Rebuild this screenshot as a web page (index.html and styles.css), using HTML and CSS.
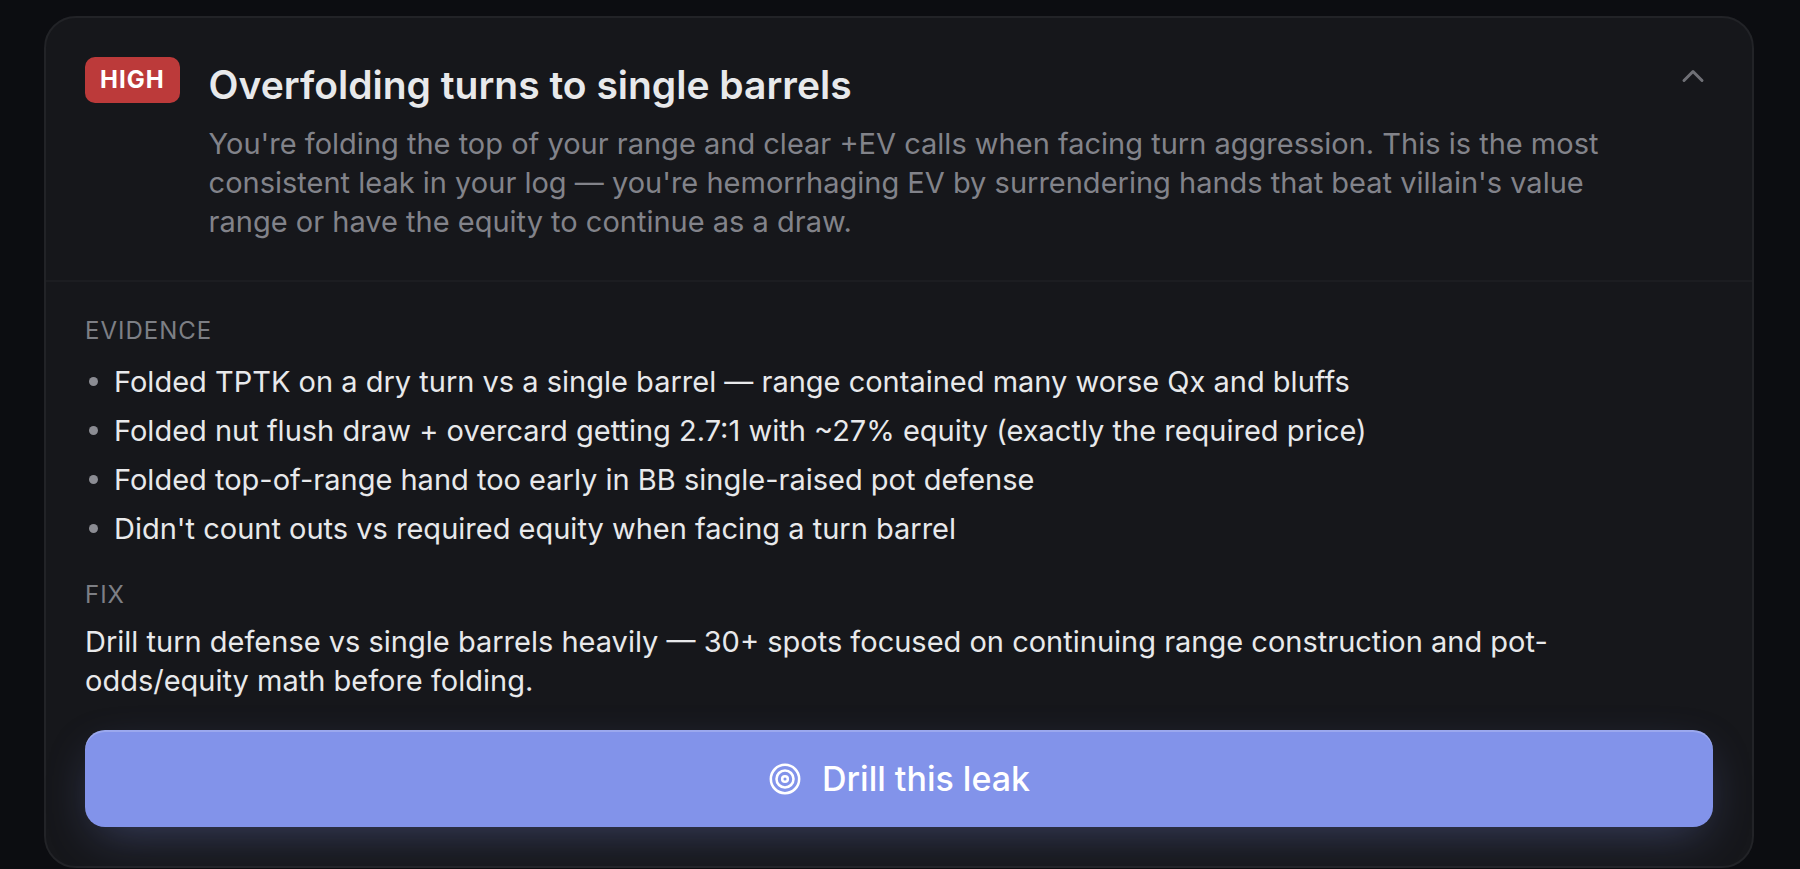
FILE: index.html
```html
<!DOCTYPE html>
<html lang="en">
<head>
  <meta charset="UTF-8">
  <meta name="viewport" content="width=device-width, initial-scale=1.0">
  <title>Leak Report</title>
  <link rel="stylesheet" href="styles.css">
</head>
<body>
  <article class="leak-card">
    <header class="leak-header">
      <span class="badge">HIGH</span>
      <div class="leak-summary">
        <h2>Overfolding turns to single barrels</h2>
        <p>You're folding the top of your range and clear +EV calls when facing turn aggression. This is the most consistent leak in your log — you're hemorrhaging EV by surrendering hands that beat villain's value range or have the equity to continue as a draw.</p>
      </div>
      <button class="toggle" type="button" aria-label="Collapse" aria-expanded="true">
        <svg viewBox="0 0 24 24"><path d="m18 15-6-6-6 6"/></svg>
      </button>
    </header>

    <div class="leak-body">
      <section>
        <h3>EVIDENCE</h3>
        <ul class="evidence">
          <li>Folded TPTK on a dry turn vs a single barrel — range contained many worse Qx and bluffs</li>
          <li>Folded nut flush draw + overcard getting 2.7:1 with ~27% equity (exactly the required price)</li>
          <li>Folded top-of-range hand too early in BB single-raised pot defense</li>
          <li>Didn't count outs vs required equity when facing a turn barrel</li>
        </ul>
      </section>
      <section>
        <h3>FIX</h3>
        <p class="fix">Drill turn defense vs single barrels heavily — 30+ spots focused on continuing range construction and pot-odds/equity math before folding.</p>
      </section>
      <button class="drill-button" type="button">
        <svg viewBox="0 0 24 24"><circle cx="12" cy="12" r="10"/><circle cx="12" cy="12" r="6"/><circle cx="12" cy="12" r="2"/></svg>
        Drill this leak
      </button>
    </div>
  </article>
</body>
</html>
```
FILE: styles.css
```css
* {
  box-sizing: border-box;
}

body {
  margin: 0;
  padding: 16px 46px 0 44px;
  background: #0c0d11;
  color: #e8e9eb;
  font-family: Inter, sans-serif;
  font-size: 29px;
  line-height: 39px;
}

h2, h3, p, ul {
  margin: 0;
  padding: 0;
}

.leak-card {
  border: 2px solid #222327;
  border-radius: 32px;
  background: #16171b;
}

.leak-header {
  display: flex;
  align-items: flex-start;
  padding: 39px;
  border-bottom: 2px solid #1c1d21;
}

.badge {
  flex: none;
  margin-right: 29px;
  padding: 0 15px;
  border-radius: 10px;
  background: #bc3a3a;
  color: #fff;
  font-size: 24px;
  font-weight: 700;
  line-height: 46px;
  letter-spacing: 1px;
}

.leak-summary {
  flex: 1;
}

.leak-summary h2 {
  margin-bottom: 11px;
  font-size: 39px;
  font-weight: 600;
  line-height: 56px;
}

.leak-summary p {
  color: #82838a;
}

.toggle {
  flex: none;
  margin-left: 24px;
  padding: 1px 2px;
  border: none;
  background: none;
  color: #6f7076;
  cursor: pointer;
}

svg {
  display: block;
  fill: none;
  stroke: currentColor;
  stroke-linecap: round;
  stroke-linejoin: round;
}

.toggle svg {
  width: 36px;
  height: 36px;
  stroke-width: 2;
}

.leak-body {
  display: flex;
  flex-direction: column;
  gap: 30px;
  padding: 32px 39px 39px;
}

h3 {
  margin-bottom: 10px;
  color: #7d7f85;
  font-size: 24px;
  font-weight: 400;
  line-height: 34px;
  letter-spacing: 1px;
}

.evidence {
  display: flex;
  flex-direction: column;
  gap: 10px;
  padding-top: 4px;
  list-style: none;
}

.evidence li {
  display: flex;
  align-items: center;
  gap: 16px;
}

.evidence li::before {
  content: "";
  width: 9px;
  height: 9px;
  margin-left: 4px;
  border-radius: 50%;
  background: #8b8c93;
}

.fix {
  padding-right: 24px;
}

.drill-button {
  display: flex;
  align-items: center;
  justify-content: center;
  gap: 20px;
  height: 97px;
  border: none;
  border-radius: 20px;
  background: #8293ea;
  box-shadow: inset 0 2px 0 rgba(255, 255, 255, 0.2), 0 16px 48px -12px rgba(130, 147, 234, 0.35);
  color: #fff;
  font-family: inherit;
  font-size: 34px;
  font-weight: 500;
  cursor: pointer;
}

.drill-button svg {
  width: 34px;
  height: 34px;
  stroke-width: 1.8;
}
```
